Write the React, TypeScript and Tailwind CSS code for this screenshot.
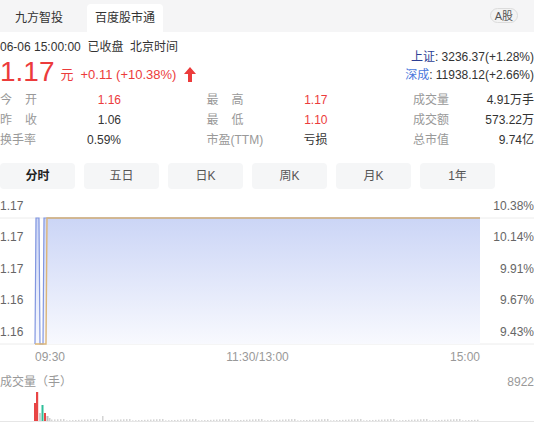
import React from 'react';

const RED = '#ec3b3b';

const stats = [
  [
    { label: ['今', '开'], value: '1.16', red: true },
    { label: ['最', '高'], value: '1.17', red: true },
    { label: ['成交量'], value: '4.91万手', red: false },
  ],
  [
    { label: ['昨', '收'], value: '1.06', red: false },
    { label: ['最', '低'], value: '1.10', red: true },
    { label: ['成交额'], value: '573.22万', red: false },
  ],
  [
    { label: ['换手率'], value: '0.59%', red: false },
    { label: ['市盈(TTM)'], value: '亏损', red: false },
    { label: ['总市值'], value: '9.74亿', red: false },
  ],
];

const periods = ['分时', '五日', '日K', '周K', '月K', '1年'];

const leftAxis = ['1.17', '1.17', '1.17', '1.16', '1.16'];
const rightAxis = ['10.38%', '10.14%', '9.91%', '9.67%', '9.43%'];

// small volume ticks after the opening bars
const ticks: { x: number; h: number }[] = [];
for (let x = 51; x < 479; x += 3) {
  const h = x === 102 ? 5 : 0.6 + ((x * 37) % 11) / 7;
  ticks.push({ x, h });
}

function UpArrow() {
  return (
    <svg width="12" height="15" viewBox="0 0 12 15" className="ml-[8px]">
      <polygon points="6,0 12,7 8,7 8,15 4,15 4,7 0,7" fill={RED} />
    </svg>
  );
}

function PriceChart() {
  const top = 22;
  const bottom = 148;
  return (
    <svg width="534" height="150" className="block text-[12px]">
      <defs>
        <linearGradient id="fill" x1="0" y1="0" x2="0" y2="1">
          <stop offset="0" stopColor="#cbd5f6" />
          <stop offset="1" stopColor="#f8f9fe" />
        </linearGradient>
      </defs>
      <line x1="0" x2="534" y1={top} y2={top} stroke="#ececec" />
      <line x1="0" x2="534" y1={bottom} y2={bottom} stroke="#ececec" />
      <polygon
        points={`36,${top} 39,${top} 40,${bottom} 35,${bottom}`}
        fill="url(#fill)"
      />
      <polygon
        points={`44,${top} 480,${top} 480,${bottom} 43,${bottom}`}
        fill="url(#fill)"
      />
      <polyline
        points={`35,${bottom} 36,${top} 39,${top} 40,${bottom} 43,${bottom} 44,${top} 480,${top}`}
        fill="none"
        stroke="#8196e0"
        strokeWidth="1.2"
      />
      <polyline
        points={`35,${bottom} 46,${bottom} 47,${top} 480,${top}`}
        fill="none"
        stroke="#dcb577"
        strokeWidth="1.4"
      />
      {leftAxis.map((t, i) => (
        <text key={'l' + i} x="0" y={13.5 + i * 31.5} fill="#666">
          {t}
        </text>
      ))}
      {rightAxis.map((t, i) => (
        <text key={'r' + i} x="534" y={13.5 + i * 31.5} fill="#666" textAnchor="end">
          {t}
        </text>
      ))}
    </svg>
  );
}

function VolumeChart() {
  const base = 31;
  return (
    <svg width="534" height="35" className="block">
      <line x1="0" x2="534" y1={base + 0.5} y2={base + 0.5} stroke="#e6e6e6" />
      {ticks.map((t) => (
        <rect key={t.x} x={t.x} y={base - t.h} width="1.5" height={t.h} fill="#d4d4d4" />
      ))}
      <rect x="34" y={base - 18} width="2" height="18" fill="#e84545" />
      <rect x="36" y={base - 29} width="2.2" height="29" fill="#e84545" />
      <rect x="39" y={base - 8} width="2" height="8" fill="#cfcfcf" />
      <rect x="41.5" y={base - 16} width="2" height="16" fill="#2fbf9a" />
      <rect x="44" y={base - 8} width="2" height="8" fill="#e84545" />
      <rect x="46.5" y={base - 5} width="2" height="5" fill="#bdbdbd" />
      <rect x="49" y={base - 3} width="1.5" height="3" fill="#cfcfcf" />
    </svg>
  );
}

export default function App() {
  return (
    <div className="w-[553px] h-[425px] overflow-hidden bg-white text-[#333] font-[family-name:'Liberation_Sans','Noto_Sans_CJK_SC',sans-serif]">
      {/* Tabs */}
      <div className="w-[534px] h-[32px] bg-[#f5f5f6] flex items-end pl-[7px] pr-[16px]">
        <div className="px-[8px] h-[28px] leading-[28px] text-[12px] text-[#333]">九方智投</div>
        <div className="ml-[16px] px-[8px] h-[28px] leading-[28px] text-[12px] text-[#333] bg-white rounded-t-[4px]">
          百度股市通
        </div>
        <div className="ml-auto self-center mb-[2px] px-[4px] h-[15px] leading-[14px] text-[11px] text-[#555] border border-[#dcdcdc] rounded-full bg-[#f3f3f3]">
          A股
        </div>
      </div>

      {/* Quote header */}
      <div className="w-[534px] flex justify-between">
        <div>
          <div className="mt-[7px] h-[16px] leading-[16px] text-[12px] text-[#333]">
            06-06 15:00:00&nbsp;&nbsp;已收盘&nbsp;&nbsp;北京时间
          </div>
          <div className="mt-[2px] h-[30px] flex items-center">
            <span className="text-[28px] leading-[30px]" style={{ color: RED }}>1.17</span>
            <span className="ml-[6px] mt-[6px] text-[13px]" style={{ color: RED }}>元</span>
            <span className="ml-[7px] mt-[5px] text-[13px]" style={{ color: RED }}>+0.11 (+10.38%)</span>
            <span className="mt-[4px]"><UpArrow /></span>
          </div>
        </div>
        <div className="pt-[16px] text-[12px] text-right">
          <div className="h-[18px] leading-[18px]">
            <span className="text-[#2e3f94]">上证</span>: 3236.37(+1.28%)
          </div>
          <div className="h-[18px] leading-[18px]">
            <span className="text-[#4a78dc]">深成</span>: 11938.12(+2.66%)
          </div>
        </div>
      </div>

      {/* Stats table */}
      <div className="mt-[3px] w-[534px] text-[12px]">
        {stats.map((row, r) => (
          <div key={r} className="h-[20px] leading-[20px] flex gap-[85.5px]">
            {row.map((c, i) => (
              <div key={i} className="w-[121px] flex justify-between">
                {c.label.length === 2 ? (
                  <span className="w-[37px] flex justify-between text-[#999]">
                    <span>{c.label[0]}</span>
                    <span>{c.label[1]}</span>
                  </span>
                ) : (
                  <span className="text-[#999]">{c.label[0]}</span>
                )}
                <span style={{ color: c.red ? RED : '#333' }}>{c.value}</span>
              </div>
            ))}
          </div>
        ))}
      </div>

      {/* Period buttons */}
      <div className="mt-[13px] flex gap-[9px]">
        {periods.map((p, i) => (
          <div
            key={p}
            className={`w-[75px] h-[26px] leading-[26px] text-center text-[12px] rounded-[4px] bg-[#f5f6f7] ${
              i === 0 ? 'font-bold text-[#222]' : 'text-[#555]'
            }`}
          >
            {p}
          </div>
        ))}
      </div>

      {/* Price chart */}
      <div className="mt-[7px]">
        <PriceChart />
      </div>

      {/* Time axis */}
      <div className="mt-[3px] w-[480px] pl-[35px] h-[16px] leading-[16px] flex justify-between text-[12px] text-[#999]">
        <span>09:30</span>
        <span>11:30/13:00</span>
        <span>15:00</span>
      </div>

      {/* Volume */}
      <div className="mt-[9px] w-[534px] h-[16px] leading-[16px] flex justify-between text-[12px] text-[#999]">
        <span>成交量（手）</span>
        <span>8922</span>
      </div>
      <VolumeChart />
    </div>
  );
}
